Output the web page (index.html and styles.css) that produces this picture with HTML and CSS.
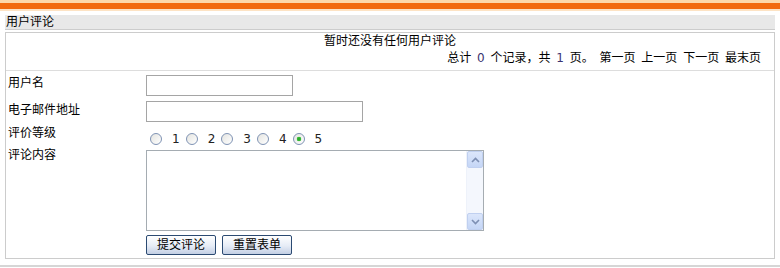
FILE: index.html
```html
<!DOCTYPE html>
<html>
<head>
    <title>用户评论</title>
    <meta charset="UTF-8">
    <link rel="stylesheet" href="styles.css">
</head>
<body>
    <div class="topbar"></div>

    <div class="section">
        <div class="section-title">用户评论</div>

        <div class="box">
            <div class="summary">
                <div class="empty">暂时还没有任何用户评论</div>
                <div class="pager">总计 <span class="num">0</span> 个记录，共 <span class="num">1</span> 页。 第一页 上一页 下一页 最末页</div>
            </div>

            <form class="comment-form">
                <div class="row row-name">
                    <label class="field-label" for="username">用户名</label>
                    <input type="text" id="username" class="text-input short">
                </div>

                <div class="row row-email">
                    <label class="field-label" for="email">电子邮件地址</label>
                    <input type="text" id="email" class="text-input long">
                </div>

                <div class="row row-rank">
                    <span class="field-label">评价等级</span>
                    <div class="ranks">
                        <label class="rank"><input type="radio" name="rank" value="1">1</label>
                        <label class="rank"><input type="radio" name="rank" value="2">2</label>
                        <label class="rank"><input type="radio" name="rank" value="3">3</label>
                        <label class="rank"><input type="radio" name="rank" value="4">4</label>
                        <label class="rank"><input type="radio" name="rank" value="5" checked>5</label>
                    </div>
                </div>

                <div class="row row-content">
                    <label class="field-label" for="content">评论内容</label>
                    <div class="textarea-wrap">
                        <textarea id="content" class="content-input"></textarea>
                        <div class="scrollbar">
                            <div class="scroll-btn">
                                <svg width="9" height="6" viewBox="0 0 9 6"><polyline points="1,5 4.5,1.5 8,5" fill="none" stroke="#7d8fb3" stroke-width="1.6"/></svg>
                            </div>
                            <div class="scroll-track"></div>
                            <div class="scroll-btn">
                                <svg width="9" height="6" viewBox="0 0 9 6"><polyline points="1,1 4.5,4.5 8,1" fill="none" stroke="#7d8fb3" stroke-width="1.6"/></svg>
                            </div>
                        </div>
                    </div>
                </div>

                <div class="row row-buttons">
                    <span class="field-label"></span>
                    <button type="button" class="btn">提交评论</button>
                    <button type="reset" class="btn">重置表单</button>
                </div>
            </form>
        </div>
    </div>

    <div class="bottom-line"></div>
</body>
</html>
```

FILE: styles.css
```css
body {
    margin: 0;
    font-family: "DejaVu Sans", "Noto Sans CJK SC", sans-serif;
    font-size: 12px;
    color: #000;
    background-color: #fff;
}

.topbar {
    height: 6px;
    background-color: #f26b10;
    border-top: 3px solid #fdd9ac;
    border-bottom: 2px solid #fde3c4;
}

.section {
    margin: 4px 5px 0 5px;
}

.section-title {
    height: 14px;
    line-height: 14px;
    padding-left: 1px;
    background-color: #e8e8e8;
    border-bottom: 1px solid #cccccc;
}

.box {
    margin-top: 2px;
    border: 1px solid #cccccc;
}

.summary {
    padding-bottom: 3px;
    border-bottom: 1px solid #dddddd;
}

.empty {
    line-height: 17px;
    text-align: center;
}

.pager {
    line-height: 17px;
    text-align: right;
    padding-right: 13px;
    word-spacing: 2px;
}

.num {
    color: #3b3370;
}

.comment-form {
    padding: 4px 0 3px 0;
}

.row {
    display: flex;
    align-items: flex-start;
}

.field-label {
    width: 138px;
    padding-left: 2px;
    line-height: 14px;
    flex-shrink: 0;
}

.row-name .field-label {
    padding-top: 1px;
}

.row-email {
    margin-top: 5px;
}

.row-email .field-label {
    padding-top: 2px;
}

.row-rank {
    margin-top: 2px;
    height: 24px;
}

.row-rank .field-label {
    padding-top: 2px;
}

.text-input {
    height: 21px;
    margin: 0;
    padding: 0 2px;
    border: 1px solid #a5a5a5;
    box-sizing: border-box;
    font-size: 12px;
}

.short {
    width: 147px;
}

.long {
    width: 217px;
}

.ranks {
    display: flex;
    padding-top: 8px;
    padding-left: 4px;
}

.rank {
    display: flex;
    align-items: center;
    margin-right: 6px;
    line-height: 14px;
    color: #222;
}

.rank input {
    appearance: none;
    -webkit-appearance: none;
    width: 12px;
    height: 12px;
    margin: 0 10px 0 0;
    border: 1px solid #7f93b4;
    border-radius: 50%;
    box-sizing: border-box;
    background: linear-gradient(135deg, #e4e4e0, #ffffff);
}

.rank input:checked {
    background: radial-gradient(circle, #22a322 0, #3cbc3c 2px, transparent 2.6px), linear-gradient(135deg, #e4e4e0, #ffffff);
}

.row-content .field-label {
    padding-top: 0;
}

.textarea-wrap {
    display: flex;
    width: 338px;
    height: 81px;
    margin-top: 2px;
    border: 1px solid #a5acb2;
    box-sizing: border-box;
}

.content-input {
    flex: 1;
    margin: 0;
    border: none;
    resize: none;
    outline: none;
    font-size: 12px;
}

.scrollbar {
    width: 16px;
    display: flex;
    flex-direction: column;
    background-color: #f3f6fc;
    border-left: 1px solid #eef2fa;
}

.scroll-btn {
    height: 15px;
    display: flex;
    align-items: center;
    justify-content: center;
    background: linear-gradient(#dbe6fb, #c5d6f6);
    border: 1px solid #c0d0f0;
    border-radius: 2px;
}

.scroll-track {
    flex: 1;
    background-color: #f4f7fd;
}

.row-buttons {
    margin-top: 4px;
}

.btn {
    width: 70px;
    height: 20px;
    margin: 0 6px 0 0;
    padding: 0;
    font-family: "DejaVu Sans", "Noto Sans CJK SC", sans-serif;
    font-size: 12px;
    line-height: 16px;
    color: #000;
    border: 1px solid #2b4a72;
    border-radius: 2px;
    background: linear-gradient(#ffffff, #e6ecf6 55%, #c3cfe4);
    cursor: pointer;
}

.bottom-line {
    height: 2px;
    margin-top: 6px;
    background-color: #d6d6d6;
}
```
